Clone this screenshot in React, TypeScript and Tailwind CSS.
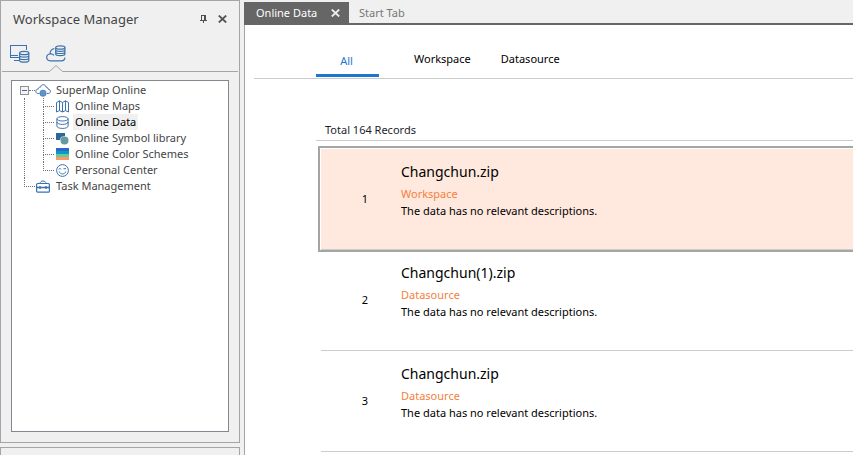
import { useState, type ReactNode } from 'react';

const BLUE = '#3a72ad';

function PinIcon() {
  return (
    <svg width="7" height="8" viewBox="0 0 7 8" shapeRendering="crispEdges" fill="#505050">
      <path d="M1 0h5v1H1zM1 1h1v4H1zM4 1h2v4H4zM0 5h7v1H0zM3 6h1v2H3z" />
    </svg>
  );
}

function CloseIcon({ color }: { color: string }) {
  return (
    <svg width="9" height="8" viewBox="0 0 9 8" stroke={color} strokeWidth="1.8">
      <path d="M.8.5l7.4 7M8.2.5l-7.4 7" />
    </svg>
  );
}

function LocalDataIcon() {
  return (
    <svg width="20" height="18" viewBox="0 0 20 18" fill="none" stroke={BLUE} strokeWidth="1.2">
      <path d="M16.500 5V.5H.5v12H9M.5 10.500H8M4 15.500h5" shapeRendering="crispEdges" />
      <ellipse cx="14.2" cy="8" rx="4.6" ry="1.7" />
      <path d="M9.6 8v7.4c0 2.3 9.2 2.3 9.2 0V8M9.6 10.500c0 2.200 9.200 2.200 9.200 0M9.600 13c0 2.200 9.200 2.200 9.200 0" />
    </svg>
  );
}

function CloudDataIcon() {
  return (
    <svg width="20" height="17" viewBox="0 0 20 17" fill="none" stroke={BLUE} strokeWidth="1.2">
      <ellipse cx="14.3" cy="2.500" rx="4.600" ry="1.700" />
      <path d="M9.700 2.500v6.400c0 2.200 9.200 2.200 9.200 0V2.500M9.700 4.800c0 2.100 9.200 2.100 9.200 0M9.700 6.900c0 2.100 9.200 2.100 9.200 0" />
      <path d="M8.400 3.500C5.600 4.200 3.900 6.300 4 9 1.600 9.200.7 10.700.7 12.300.7 14.600 2.300 15.800 4.500 15.800h10.800c2.200 0 3.500-1.200 3.600-3.300M4 9c1.600-.3 3 .2 4 1.300" />
    </svg>
  );
}

function CloudIcon() {
  return (
    <svg width="16" height="13" viewBox="0 0 16 13" fill="none" stroke="#4a70a8">
      <path d="M4.500 9.500H3.200C.2 9.500-.2 5.300 3.300 5c0-1.300 1-2 2.100-1.800C5.900-.1 10.600-.3 11 3.200c1.200-.2 2 .6 1.900 1.800 3.500.3 3.100 4.500.2 4.500h-1.300" />
      <circle cx="8" cy="9.200" r="3.200" fill="#5b96cd" stroke={BLUE} strokeWidth=".5" />
    </svg>
  );
}

function MapIcon() {
  return (
    <svg width="13" height="13" viewBox="0 0 13 13" fill="none" stroke={BLUE}>
      <path d="M.5 2.500L3.500.8l3 1.700 3-1.700 3 1.700v9.500l-3-1.400-3 1.400-3-1.400-3 1.400zM3.500.8v9.800M6.500 2.500V12M9.500.8v9.800" />
    </svg>
  );
}

function DatabaseIcon() {
  return (
    <svg width="13" height="13" viewBox="0 0 13 13" fill="none" stroke={BLUE}>
      <ellipse cx="6.500" cy="2.800" rx="5.600" ry="2.200" />
      <path d="M.9 2.800v7.100c0 3.400 11.200 3.400 11.200 0V2.800M.9 6c0 3.200 11.200 3.200 11.200 0" />
    </svg>
  );
}

function SymbolIcon() {
  return (
    <svg width="13" height="13" viewBox="0 0 13 13">
      <path d="M0 1h9v3L5 5 4 8H0z" fill="#30659e" />
      <circle cx="8.500" cy="8.500" r="4" fill="#649b9c" />
    </svg>
  );
}

function ColorIcon() {
  return (
    <svg width="13" height="12" viewBox="0 0 13 12" shapeRendering="crispEdges">
      <path d="M0 0h13v3H0z" fill="#2f66cc" />
      <path d="M0 3h13v3H0z" fill="#089ac8" />
      <path d="M0 6h13v3H0z" fill="#62cc98" />
      <path d="M0 9h13v3H0z" fill="#ff9868" />
    </svg>
  );
}

function SmileIcon() {
  return (
    <svg width="13" height="13" viewBox="0 0 13 13" fill="none" stroke={BLUE}>
      <circle cx="6.500" cy="6.500" r="5.900" />
      <path d="M3 5.300c.3-1 1.700-1 2 0M7.500 4.700h2.500M3.300 7.500c.6 3.200 5.800 3.200 6.400 0" />
    </svg>
  );
}

function ToolboxIcon() {
  return (
    <svg width="14" height="13" viewBox="0 0 14 13" fill="none" stroke={BLUE}>
      <path d="M4 3.500C4 .2 10 .2 10 3.500" />
      <rect x=".6" y="3.500" width="12.800" height="8.700" rx="1" strokeWidth="1.200" />
      <path d="M1 7.500h12M4 6v3M10 6v3" strokeWidth="1.400" />
    </svg>
  );
}

function NodeIcon({ children }: { children: ReactNode }) {
  return <span className="flex h-4 w-4 shrink-0 items-center justify-center">{children}</span>;
}

function Branch({ last = false }: { last?: boolean }) {
  return (
    <span className="flex w-[11px] shrink-0 flex-col">
      <span className="h-[9px] border-b border-l border-dotted border-[#707070]" />
      {!last && <span className="h-[7px] border-l border-dotted border-[#707070]" />}
    </span>
  );
}

const children = [
  { name: 'Online Maps', icon: <MapIcon /> },
  { name: 'Online Data', icon: <DatabaseIcon /> },
  { name: 'Online Symbol library', icon: <SymbolIcon /> },
  { name: 'Online Color Schemes', icon: <ColorIcon /> },
  { name: 'Personal Center', icon: <SmileIcon /> },
];

const records = [
  { name: 'Changchun.zip', kind: 'Workspace' },
  { name: 'Changchun(1).zip', kind: 'Datasource' },
  { name: 'Changchun.zip', kind: 'Datasource' },
];

function WorkspaceTree() {
  const [node, setNode] = useState('Online Data');
  return (
    <ul className="mx-[10px] mt-2 mb-[10px] flex-1 border border-[#828790] bg-white pt-px pl-2 text-[11px] leading-4 text-[#444]">
      <li>
        <div className="flex h-4 items-center">
          <button aria-label="Collapse SuperMap Online" className="flex h-[9px] w-[9px] items-center justify-center border border-[#919191] bg-[#f4f4f4]">
            <span className="h-px w-[5px] bg-[#4b63a7]" />
          </button>
          <span className="w-[6px] border-t border-dotted border-[#707070]" />
          <NodeIcon><CloudIcon /></NodeIcon>
          <button className="ml-1 px-px">SuperMap Online</button>
        </div>
        <ul className="ml-1 border-l border-dotted border-[#707070] pl-[18px]">
          {children.map((c, i) => (
            <li key={c.name} className="flex h-4">
              <Branch last={i === children.length - 1} />
              <NodeIcon>{c.icon}</NodeIcon>
              <button
                onClick={() => setNode(c.name)}
                className={'ml-[3px] px-[2px] ' + (node === c.name ? 'bg-[#f0f0f0] text-black' : '')}
              >
                {c.name}
              </button>
            </li>
          ))}
        </ul>
      </li>
      <li className="flex h-4 pl-1">
        <Branch last />
        <NodeIcon><ToolboxIcon /></NodeIcon>
        <button className="ml-1 px-px">Task Management</button>
      </li>
    </ul>
  );
}

function WorkspacePanel() {
  return (
    <aside className="flex w-60 shrink-0 flex-col gap-1">
      <section className="flex flex-1 flex-col border border-[#a5a5a5]">
        <header className="flex h-9 items-center px-3">
          <h1 className="flex-1 text-[13px] leading-5 text-[#444]">Workspace Manager</h1>
          <button aria-label="Pin panel" className="mr-[11px]"><PinIcon /></button>
          <button aria-label="Close panel"><CloseIcon color="#555" /></button>
        </header>
        <div className="mt-2 flex h-[18px] items-start gap-4 pl-[9px]">
          <button aria-label="Local workspace"><LocalDataIcon /></button>
          <button aria-label="Online workspace"><CloudDataIcon /></button>
        </div>
        <div className="mx-px mt-[2px] flex items-end">
          <span className="h-px w-[47px] bg-[#a5a5a5]" />
          <svg width="14" height="7" viewBox="0 0 14 7" fill="none" stroke="#a5a5a5">
            <path d="M0 6.500h.5L7 .5l6.500 6h.5" />
          </svg>
          <span className="h-px flex-1 bg-[#a5a5a5]" />
        </div>
        <WorkspaceTree />
      </section>
      <section className="h-2 shrink-0 border border-b-0 border-[#a5a5a5]" />
    </aside>
  );
}

function RecordRow({ index, name, kind, selected }: { index: number; name: string; kind: string; selected: boolean }) {
  const row = (
    <div className={'flex h-[101px] items-center border-b border-[#ccc] ' + (selected ? 'bg-[#ffe9de]' : '')}>
      <span className="w-20 pl-2 text-center text-[11px]">{index}</span>
      <div className="pb-[18px]">
        <h2 className="text-[14px] leading-5">{name}</h2>
        <p className="mt-[3px] text-[11px] leading-[17px] text-[#f5803e]">{kind}</p>
        <p className="text-[11px] leading-[17px]">The data has no relevant descriptions.</p>
      </div>
    </div>
  );
  return selected ? (
    <li className="-mb-[2px] border-2 border-r-0 border-[#a5a5a5] pt-px pl-px">{row}</li>
  ) : (
    <li className="pl-[3px]">{row}</li>
  );
}

export default function App() {
  const [filter, setFilter] = useState('All');
  return (
    <div className="flex h-screen gap-1 overflow-hidden bg-[#f0f0f0] font-['Noto_Sans','Open_Sans',sans-serif] text-black">
      <WorkspacePanel />
      <main className="flex min-w-0 flex-1 flex-col pt-[2px]">
        <div className="flex h-[23px] shrink-0 border-b-2 border-[#666] text-[11px]">
          <div className="flex w-[105px] items-center justify-between bg-[#666] pt-px pr-[9px] pl-3 text-white">
            <button>Online Data</button>
            <button aria-label="Close Online Data"><CloseIcon color="#eee" /></button>
          </div>
          <button className="px-[10px] pt-px text-[#777]">Start Tab</button>
        </div>
        <div className="flex-1 overflow-hidden border-l border-[#a5a5a5] bg-white">
          <nav className="ml-[9px] flex h-[54px] items-end border-b border-[#ccc] pl-[62px] text-[11px]">
            <button
              onClick={() => setFilter('All')}
              className={'mb-px h-8 w-[63px] border-b-[3px] pt-[3px] pr-[2px] ' + (filter === 'All' ? 'border-[#1c78cd] text-[#1c78cd]' : 'border-transparent')}
            >
              All
            </button>
            <button onClick={() => setFilter('Workspace')} className="mb-[11px] ml-[35px]">Workspace</button>
            <button onClick={() => setFilter('Datasource')} className="mb-[11px] ml-[30px]">Datasource</button>
          </nav>
          <p className="mt-[41px] ml-[71px] border-b border-[#ccc] pl-[9px] text-[11px] leading-5 text-[#1e1e2e]">
            Total 164 Records
          </p>
          <ol className="mt-[5px] ml-[73px]">
            {records.map((r, i) => (
              <RecordRow key={i} index={i + 1} name={r.name} kind={r.kind} selected={i === 0} />
            ))}
          </ol>
        </div>
      </main>
    </div>
  );
}
